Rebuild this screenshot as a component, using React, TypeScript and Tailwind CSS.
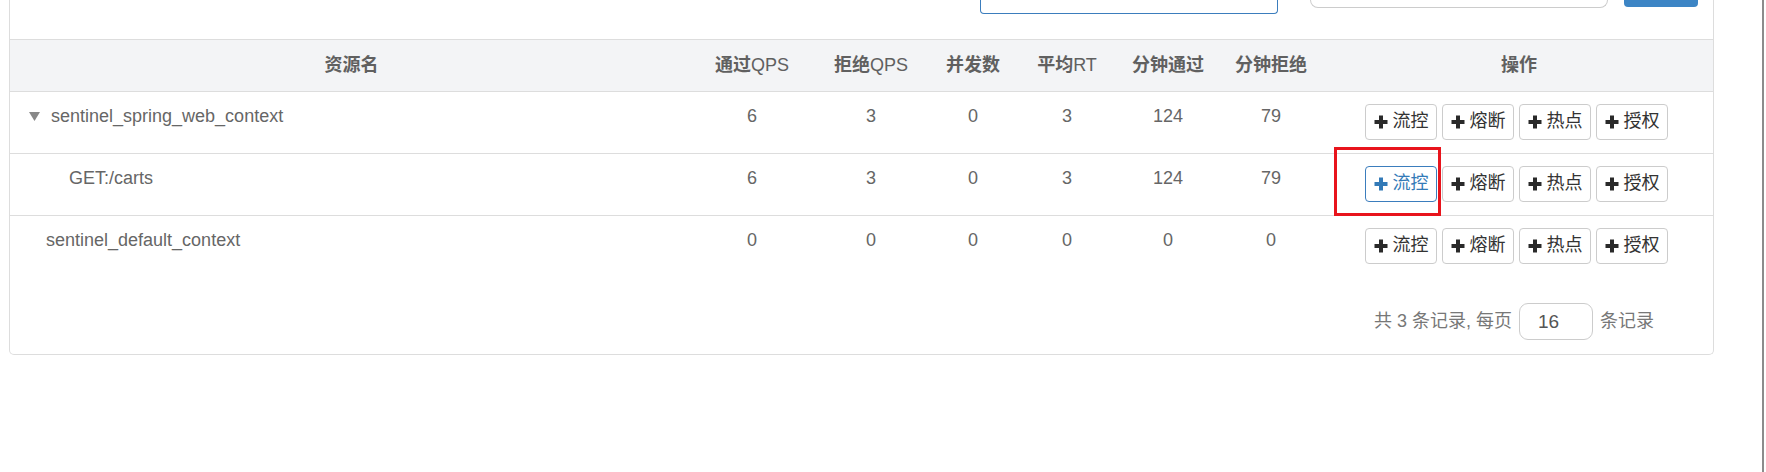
import React from 'react'

type Row = {
    name: string
    indent: 'parent' | 'child' | 'plain'
    pass: number
    block: number
    thread: number
    rt: number
    minPass: number
    minBlock: number
    focused?: boolean
}

const rows: Row[] = [
    { name: 'sentinel_spring_web_context', indent: 'parent', pass: 6, block: 3, thread: 0, rt: 3, minPass: 124, minBlock: 79 },
    { name: 'GET:/carts', indent: 'child', pass: 6, block: 3, thread: 0, rt: 3, minPass: 124, minBlock: 79, focused: true },
    { name: 'sentinel_default_context', indent: 'plain', pass: 0, block: 0, thread: 0, rt: 0, minPass: 0, minBlock: 0 },
]

// [chinese part, latin part]
const headers: [string, string][] = [
    ['通过', 'QPS'],
    ['拒绝', 'QPS'],
    ['并发数', ''],
    ['平均', 'RT'],
    ['分钟通过', ''],
    ['分钟拒绝', ''],
]

const cols = 'grid grid-cols-[683px_118px_120px_84px_104px_98px_108px_388px]'

function PlusIcon({ color }: { color: string }) {
    return (
        <svg width="14" height="14" viewBox="0 0 14 14" className="shrink-0">
            <rect x="5" y="0.5" width="4" height="13" fill={color} />
            <rect x="0.5" y="5" width="13" height="4" fill={color} />
        </svg>
    )
}

function ActionButton({ label, active }: { label: string; active?: boolean }) {
    return (
        <button
            className={
                active
                    ? 'w-[72px] h-[36px] flex items-center justify-center gap-[5px] rounded-[4px] border border-[#3b7dbd] bg-white text-[#337ab7]'
                    : 'w-[72px] h-[36px] flex items-center justify-center gap-[5px] rounded-[4px] border border-[#cccccc] bg-white text-[#333333]'
            }
        >
            <PlusIcon color={active ? '#337ab7' : '#2a2a2a'} />
            <span>{label}</span>
        </button>
    )
}

export default function App() {
    return (
        <div
            className="flex w-full h-[472px] bg-white overflow-hidden text-[18px] leading-[1.42857] text-[#666666]"
            style={{ fontFamily: '"Liberation Sans", "Noto Sans CJK SC", sans-serif' }}
        >
            <div className="flex-1">
                <div className="ml-[9px] w-[1705px] border-x border-b border-[#dddddd] rounded-b-[5px]">
                    {/* Toolbar (cut off at the top) */}
                    <div className="h-[39px] flex items-start">
                        <div className="ml-[970px] w-[298px] h-[14px] border-x border-b border-[#3b7dbd] rounded-b-[4px]" />
                        <div className="ml-[32px] w-[298px] h-[8px] border-x border-b border-[#cccccc] rounded-b-[9px]" />
                        <div className="ml-[16px] w-[74px] h-[7px] bg-[#3c85c5] rounded-b-[4px]" />
                    </div>

                    {/* Header */}
                    <div className={`${cols} h-[53px] items-center border-y border-[#dddddd] bg-[#f3f4f6] text-[#606060]`}>
                        <div className="text-center font-bold">资源名</div>
                        {headers.map(([zh, en]) => (
                            <div key={zh} className="text-center whitespace-nowrap">
                                <span className="font-bold">{zh}</span>
                                {en}
                            </div>
                        ))}
                        <div className="text-center font-bold">操作</div>
                    </div>

                    {/* Rows */}
                    {rows.map((r, i) => (
                        <div
                            key={r.name}
                            className={`${cols} items-start pt-[12px] h-[62px] ${i < rows.length - 1 ? 'border-b border-[#dddddd]' : ''}`}
                        >
                            <div
                                className={
                                    r.indent === 'parent'
                                        ? 'flex items-center pl-[19px] gap-[11px]'
                                        : r.indent === 'child'
                                        ? 'pl-[59px]'
                                        : 'pl-[36px]'
                                }
                            >
                                {r.indent === 'parent' && (
                                    <svg width="11" height="9" viewBox="0 0 11 9" className="shrink-0">
                                        <polygon points="0,0 11,0 5.5,9" fill="#888888" />
                                    </svg>
                                )}
                                <span>{r.name}</span>
                            </div>
                            <div className="text-center">{r.pass}</div>
                            <div className="text-center">{r.block}</div>
                            <div className="text-center">{r.thread}</div>
                            <div className="text-center">{r.rt}</div>
                            <div className="text-center">{r.minPass}</div>
                            <div className="text-center">{r.minBlock}</div>
                            <div className="flex justify-center gap-[5px] pr-[5px]">
                                <div className="relative">
                                    <ActionButton label="流控" active={r.focused} />
                                    {r.focused && (
                                        <div className="absolute -left-[31px] -top-[19px] -right-[4px] -bottom-[14px] border-[3px] border-[#e8141c] pointer-events-none" />
                                    )}
                                </div>
                                <ActionButton label="熔断" />
                                <ActionButton label="热点" />
                                <ActionButton label="授权" />
                            </div>
                        </div>
                    ))}

                    {/* Pagination */}
                    <div className="flex justify-end items-center mt-[25px] pb-[14px] pr-[59px] text-[#777777]">
                        <span className="whitespace-pre">共 3 条记录, 每页</span>
                        <div className="mx-[7px] w-[74px] h-[37px] flex items-center pl-[18px] border border-[#cccccc] rounded-[9px] text-[19px] text-[#555555]">
                            16
                        </div>
                        <span>条记录</span>
                    </div>
                </div>
            </div>
            <div className="w-[2px] h-full bg-[#8c8c8c]" />
            <div className="w-[2px] h-full bg-white" />
        </div>
    )
}
